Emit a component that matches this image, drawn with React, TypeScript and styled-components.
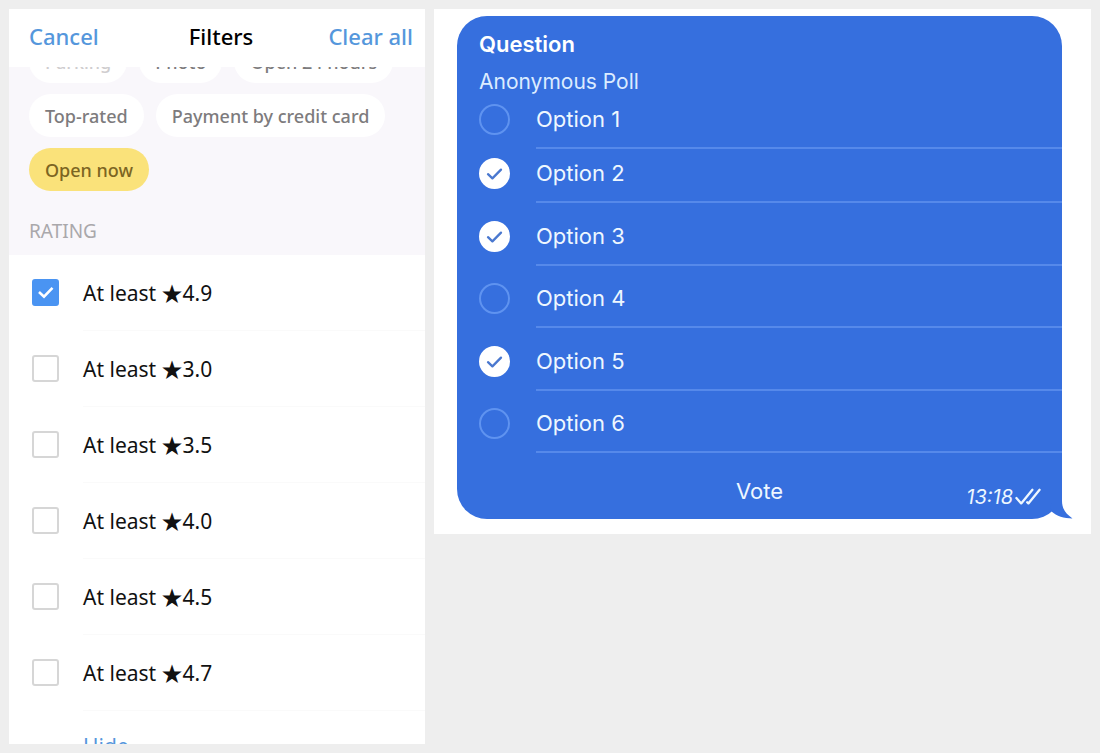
import React, { useState } from "react";
import styled, { createGlobalStyle } from "styled-components";

const GlobalStyle = createGlobalStyle`
  *, *::before, *::after { box-sizing: border-box; }
  body { margin: 0; background: #eeeeee; }
  button { border: 0; background: none; padding: 0; margin: 0; font: inherit; color: inherit; cursor: pointer; }
  input { margin: 0; }
  h1, h2, p { margin: 0; }
`;

const Page = styled.main`
  display: grid;
  grid-template-columns: minmax(0, 416fr) minmax(0, 657fr);
  align-items: start;
  gap: 9px;
  padding: 9px;
`;

/* ---------- Filters ---------- */

const FilterPanel = styled.section`
  background: #ffffff;
  font-family: "Noto Sans", "Noto Sans CJK JP", sans-serif;
  overflow: hidden;
`;

const FilterHeader = styled.header`
  display: grid;
  grid-template-columns: 1fr auto 1fr;
  align-items: center;
  height: 58px;
  padding: 0 12px 4px 20px;
  font-size: 22px;
  line-height: 28px;
`;

const HeaderAction = styled.button<{ $end?: boolean }>`
  justify-self: ${(p) => (p.$end ? "end" : "start")};
  color: #5597dc;
  font-weight: 500;
`;

const FilterTitle = styled.h1`
  font-size: 22px;
  font-weight: 500;
  color: #000000;
`;

const FilterBody = styled.div`
  background: #f9f7fb;
`;

const TagViewport = styled.div`
  display: flex;
  flex-direction: column;
  justify-content: flex-end;
  gap: 11px;
  height: 124px;
  padding: 0 20px;
  overflow: hidden;
`;

const TagRow = styled.div`
  display: flex;
  flex: none;
  gap: 12px;
`;

type Tone = "normal" | "muted" | "active";
const tagBackground = { normal: "#ffffff", muted: "#ffffff", active: "#fae27a" };
const tagColor = { normal: "#7d7b7d", muted: "#cfcdcf", active: "#7c6522" };

const Tag = styled.button<{ $tone: Tone }>`
  height: 43px;
  padding: 0 16px;
  border-radius: 22px;
  background: ${(p) => tagBackground[p.$tone]};
  color: ${(p) => tagColor[p.$tone]};
  font-size: 18px;
  font-weight: 500;
  line-height: 24px;
  white-space: nowrap;
`;

const SectionTitle = styled.h2`
  padding: 28px 20px 12px;
  font-size: 19px;
  font-weight: 400;
  line-height: 24px;
  color: #aaa8ab;
`;

const RatingRow = styled.label`
  display: flex;
  align-items: center;
  height: 76px;
  padding-left: 23px;
  cursor: pointer;
`;

const RatingText = styled.span`
  display: flex;
  align-items: center;
  flex: 1;
  align-self: stretch;
  margin-left: 24px;
  border-bottom: 1px solid #fafafa;
  font-size: 21px;
  line-height: 28px;
  color: #111111;
`;

const Mark = styled.span`
  display: grid;
  flex: none;
  margin-bottom: 2px;

  > * { grid-area: 1 / 1; }
  > svg { pointer-events: none; place-self: center; }
`;

const Square = styled.input`
  appearance: none;
  width: 27px;
  height: 27px;
  border: 2px solid #d6d6d6;
  border-radius: 3px;
  background: #ffffff;

  &:checked { border-color: #4a94f2; background: #4a94f2; }
`;

const HideButton = styled.button`
  display: block;
  height: 33px;
  padding: 21px 0 0 74px;
  overflow: hidden;
  font-size: 21px;
  line-height: 28px;
  color: #5597dc;
`;

/* ---------- Poll ---------- */

const PollPanel = styled.section`
  padding: 7px 29px 15px 23px;
  background: #ffffff;
  font-family: Inter, "Liberation Sans", sans-serif;
`;

const Bubble = styled.div`
  position: relative;
  border-radius: 30px;
  background: #366fde;
  color: #eef7ff;
`;

const PollHead = styled.header`
  display: flex;
  flex-direction: column;
  gap: 10px;
  padding: 15px 22px 0;
  line-height: 27px;
`;

const Question = styled.h2`
  font-size: 22px;
  font-weight: 600;
  color: #ffffff;
`;

const PollKind = styled.p`
  font-size: 21px;
  color: #dcecff;
`;

const PollRow = styled.label`
  display: flex;
  align-items: flex-end;
  height: 62px;
  padding-left: 22px;
  cursor: pointer;

  &:nth-child(odd) { height: 63px; }
  &:nth-child(-n + 2) { height: 54px; }
`;

const PollMark = styled(Mark)`
  margin-bottom: 14px;
`;

const Round = styled.input`
  appearance: none;
  width: 31px;
  height: 31px;
  border: 2px solid #5f93f0;
  border-radius: 50%;

  &:checked { border-color: #ffffff; background: #ffffff; }
`;

const PollText = styled.span`
  flex: 1;
  margin-left: 26px;
  padding-bottom: 14px;
  border-bottom: 2px solid #5689ea;
  font-size: 22px;
  line-height: 27px;
`;

const PollFooter = styled.footer`
  display: grid;
  grid-template-columns: 1fr auto 1fr;
  align-items: center;
  height: 66px;
  padding: 10px 21px 0;
`;

const VoteButton = styled.button`
  grid-column: 2;
  font-size: 22px;
  line-height: 27px;
`;

const Sent = styled.span`
  display: flex;
  align-items: center;
  justify-self: end;
  gap: 2px;
  padding-top: 12px;
  font-size: 20px;
  font-style: italic;
  line-height: 24px;
`;

const Tail = styled.svg`
  position: absolute;
  right: -12px;
  bottom: 0;
`;

const tagRows: { label: string; tone: Tone }[][] = [
  [
    { label: "Parking", tone: "muted" },
    { label: "Photo", tone: "normal" },
    { label: "Open 24 hours", tone: "normal" },
  ],
  [
    { label: "Top-rated", tone: "normal" },
    { label: "Payment by credit card", tone: "normal" },
  ],
  [{ label: "Open now", tone: "active" }],
];

const ratings = ["4.9", "3.0", "3.5", "4.0", "4.5", "4.7"];
const options = [1, 2, 3, 4, 5, 6];

function toggle<T>(list: T[], item: T): T[] {
  return list.includes(item) ? list.filter((x) => x !== item) : [...list, item];
}

function Filters() {
  const [selected, setSelected] = useState(["4.9"]);
  return (
    <FilterPanel>
      <FilterHeader>
        <HeaderAction>Cancel</HeaderAction>
        <FilterTitle>Filters</FilterTitle>
        <HeaderAction $end>Clear all</HeaderAction>
      </FilterHeader>
      <FilterBody>
        <TagViewport>
          {tagRows.map((row, i) => (
            <TagRow key={i}>
              {row.map((tag) => (
                <Tag key={tag.label} $tone={tag.tone}>{tag.label}</Tag>
              ))}
            </TagRow>
          ))}
        </TagViewport>
        <SectionTitle>RATING</SectionTitle>
      </FilterBody>
      {ratings.map((r) => (
        <RatingRow key={r}>
          <Mark>
            <Square
              type="checkbox"
              checked={selected.includes(r)}
              onChange={() => setSelected(toggle(selected, r))}
            />
            {selected.includes(r) && (
              <svg width="27" height="27" viewBox="0 0 27 27" fill="none" stroke="#ffffff" strokeWidth="2.6">
                <path d="M7 13 L12 17.6 L20.5 8.8" />
              </svg>
            )}
          </Mark>
          <RatingText>At least ★{r}</RatingText>
        </RatingRow>
      ))}
      <HideButton>Hide</HideButton>
    </FilterPanel>
  );
}

function Poll() {
  const [votes, setVotes] = useState([2, 3, 5]);
  return (
    <PollPanel>
      <Bubble>
        <PollHead>
          <Question>Question</Question>
          <PollKind>Anonymous Poll</PollKind>
        </PollHead>
        <div>
          {options.map((n) => (
            <PollRow key={n}>
              <PollMark>
                <Round
                  type="checkbox"
                  checked={votes.includes(n)}
                  onChange={() => setVotes(toggle(votes, n))}
                />
                {votes.includes(n) && (
                  <svg width="31" height="31" viewBox="0 0 31 31" fill="none" stroke="#4a78cf" strokeWidth="2.3" strokeLinecap="round" strokeLinejoin="round">
                    <path d="M9 16.2 L13.4 20.4 L22 11.6" />
                  </svg>
                )}
              </PollMark>
              <PollText>Option {n}</PollText>
            </PollRow>
          ))}
        </div>
        <PollFooter>
          <VoteButton>Vote</VoteButton>
          <Sent>
            13:18
            <svg width="26" height="18" viewBox="0 0 26 18" fill="none" stroke="#eef7ff" strokeWidth="2.3" strokeLinecap="round" strokeLinejoin="round">
              <path d="M1.4 10 L6.2 15.4 L17.4 1.8" />
              <path d="M12.2 14.2 L13.4 15.4 L24.6 1.8" />
            </svg>
          </Sent>
        </PollFooter>
        <Tail width="24" height="32" viewBox="0 0 24 32" fill="#366fde" aria-hidden="true">
          <path d="M12 0 V14 C12 22 16 27 22.5 31.4 C14 31.4 6.5 29 1.500 24.500 L0 18 Z" />
        </Tail>
      </Bubble>
    </PollPanel>
  );
}

export default function App() {
  return (
    <>
      <GlobalStyle />
      <Page>
        <Filters />
        <Poll />
      </Page>
    </>
  );
}
